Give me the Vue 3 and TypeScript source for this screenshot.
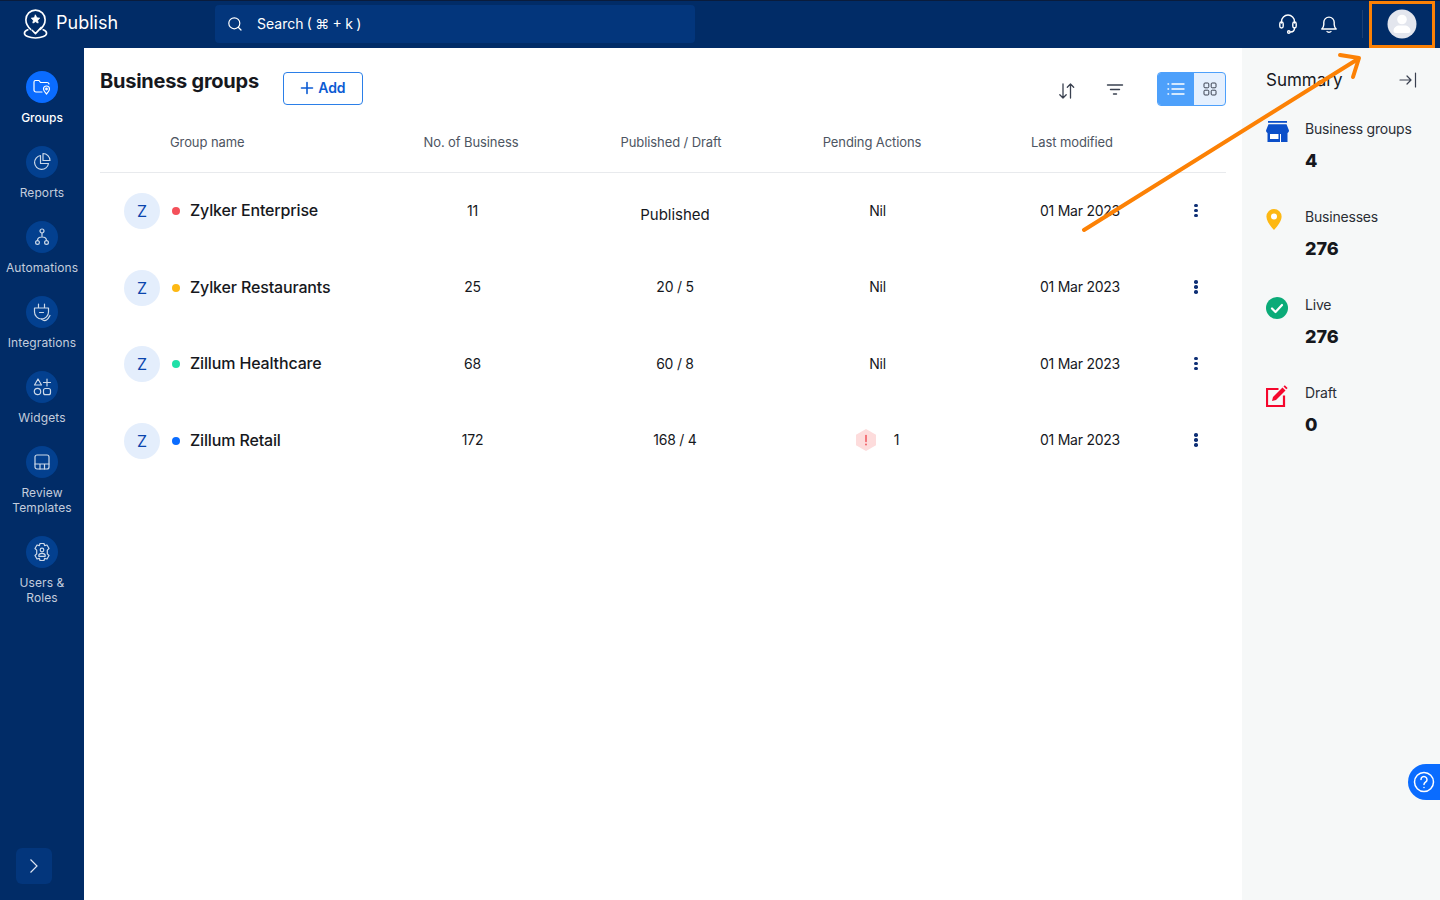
<template>
  <div class="app">
    <header class="topbar">
      <div class="brand">
        <svg class="brand-icon" width="25" height="32" viewBox="0 0 26 32" fill="none" stroke="#fff" stroke-width="1.700" stroke-linecap="round" stroke-linejoin="round">
          <path d="M8 21.500C4.500 18.500 3 15 3 11.600 3 5.900 7.500 1.500 13 1.500s10 4.400 10 10.100c0 3.400-1.500 6.900-5 9.900" />
          <path d="M13 6.800l1.300 2.800 3 .4-2.200 2 .6 3-2.700-1.500-2.700 1.500.6-3-2.200-2 3-.4z" fill="#fff" stroke-width="1" />
          <path d="M9.500 22.500l3.500 3.500 6-6.500" />
          <path d="M5 22c-2.300 .8-3.500 2-3.500 3.500 0 2.800 5 5 11.500 5s11.500-2.200 11.500-5c0-1.500-1.200-2.700-3.500-3.500" />
        </svg>
        <span>Publish</span>
      </div>
      <div class="search">
        <svg width="16" height="16" viewBox="0 0 16 16" fill="none" stroke="#fff" stroke-width="1.200" stroke-linecap="round">
          <circle cx="7.300" cy="7.300" r="5.500" />
          <path d="M11.500 11.500l2.500 2.500" />
        </svg>
        <span>Search ( ⌘ + k )</span>
      </div>
      <div class="top-actions">
        <svg width="20" height="22" viewBox="0 0 20 22" fill="none" stroke="#fff" stroke-width="1.400" stroke-linecap="round">
          <path d="M3.500 10V8.500a6.500 6.500 0 0 1 13 0V10" />
          <rect x="1.800" y="9" width="3.400" height="6" rx="1.700" />
          <rect x="14.800" y="9" width="3.400" height="6" rx="1.700" />
          <path d="M16.500 15c0 2.500-1.500 4-4 4" />
          <circle cx="10.800" cy="19" r="1.200" />
        </svg>
        <svg width="20" height="20" viewBox="0 0 20 20" fill="none" stroke="#fff" stroke-width="1.400" stroke-linecap="round" stroke-linejoin="round">
          <path d="M2.800 15h14.400c-1.300-1.300-2-2.500-2-4.500V8.300a5.200 5.200 0 0 0-10.400 0v2.200c0 2-.7 3.200-2 4.500z" />
          <path d="M8 17.500c.6 1 3.400 1 4 0" />
        </svg>
        <div class="top-sep"></div>
        <div class="avatar">
          <svg width="30" height="30" viewBox="0 0 30 30">
            <circle cx="15" cy="15" r="14.500" fill="#e3e6ee" />
            <circle cx="15" cy="10.500" r="4.800" fill="#fff" />
            <path d="M6.500 22c0-3.600 3-5.500 6-5.500h5c3 0 6 1.900 6 5.500 0 1.300-1 2-2 2H8.500c-1 0-2-.7-2-2z" fill="#fff" />
          </svg>
        </div>
      </div>
    </header>

    <div class="body">
      <nav class="sidebar">
        <div v-for="item in navItems" :key="item.label" class="nav-item" :class="{ active: item.active }">
          <div class="nav-circle">
            <svg width="20" height="20" viewBox="0 0 20 20" fill="none" stroke="#fff" stroke-width="1.200" stroke-linecap="round" stroke-linejoin="round" v-html="item.icon"></svg>
          </div>
          <div class="nav-label">
            <div v-for="line in item.label.split('|')" :key="line">{{ line }}</div>
          </div>
        </div>
        <div class="nav-expand">
          <svg width="10" height="16" viewBox="0 0 10 16" fill="none" stroke="#dfe6f3" stroke-width="1.200">
            <path d="M1.500 1.500L8 8l-6.500 6.500" />
          </svg>
        </div>
      </nav>

      <main class="main">
        <div class="page-head">
          <h1>Business groups</h1>
          <button class="add-btn">
            <svg width="14" height="14" viewBox="0 0 14 14" stroke="#0b5bd3" stroke-width="1.600" stroke-linecap="round">
              <path d="M7 1.500v11M1.500 7h11" />
            </svg>
            Add
          </button>
          <div class="head-tools">
            <svg class="sort-icon" width="18" height="18" viewBox="0 0 18 18" fill="none" stroke="#3a4150" stroke-width="1.300" stroke-linecap="round" stroke-linejoin="round">
              <path d="M5 2v14M1.800 12.800L5 16l3.200-3.200M12.500 16V2M9.300 5.200L12.500 2l3.200 3.200" />
            </svg>
            <svg class="filter-icon" width="18" height="18" viewBox="0 0 18 18" fill="none" stroke="#3a4150" stroke-width="1.400" stroke-linecap="round">
              <path d="M1.500 4h15M4.500 8.500h9M7.500 13h3" />
            </svg>
            <div class="view-toggle">
              <div class="view-btn on">
                <svg width="18" height="14" viewBox="0 0 18 14" fill="none" stroke="#fff" stroke-width="1.400" stroke-linecap="round">
                  <path d="M5 2h12M5 7h12M5 12h12M1 2h.6M1 7h.6M1 12h.6" />
                </svg>
              </div>
              <div class="view-btn">
                <svg width="14" height="14" viewBox="0 0 14 14" fill="none" stroke="#3a4150" stroke-width="1">
                  <rect x="1" y="1" width="4.800" height="4.800" rx="1" />
                  <rect x="8.200" y="1" width="4.800" height="4.800" rx="1" />
                  <rect x="1" y="8.200" width="4.800" height="4.800" rx="1" />
                  <rect x="8.200" y="8.200" width="4.800" height="4.800" rx="1" />
                </svg>
              </div>
            </div>
          </div>
        </div>

        <div class="thead">
          <div class="th-name">Group name</div>
          <div>No. of Business</div>
          <div>Published / Draft</div>
          <div>Pending Actions</div>
          <div>Last modified</div>
        </div>

        <div v-for="row in rows" :key="row.name" class="trow">
          <div class="cell-name">
            <span class="letter">Z</span>
            <span class="dot" :style="{ background: row.dot }"></span>
            <span class="name">{{ row.name }}</span>
          </div>
          <div class="cell">{{ row.count }}</div>
          <div class="cell" :class="{ published: row.status === 'Published' }">{{ row.status }}</div>
          <div class="cell pending">
            <template v-if="row.pending === 'Nil'">Nil</template>
            <template v-else>
              <svg width="22" height="24" viewBox="0 0 22 24">
                <path d="M11 1l10 5.700v10.600L11 23 1 17.300V6.700z" fill="#fddcdc" />
                <path d="M11 7.500v6" stroke="#f0545c" stroke-width="1.500" stroke-linecap="round" />
                <circle cx="11" cy="16.500" r=".9" fill="#f0545c" />
              </svg>
              <span>{{ row.pending }}</span>
            </template>
          </div>
          <div class="cell">{{ row.modified }}</div>
          <div class="cell kebab"><i></i><i></i><i></i></div>
        </div>
      </main>

      <aside class="summary">
        <div class="summary-head">
          <span>Summary</span>
          <svg width="18" height="16" viewBox="0 0 18 16" fill="none" stroke="#3a4150" stroke-width="1.200" stroke-linecap="round" stroke-linejoin="round">
            <path d="M1 8h11M8 4l4 4-4 4" />
            <path d="M16.500 1v14" />
          </svg>
        </div>
        <div class="stat">
          <div class="stat-icon">
            <svg width="23" height="21" viewBox="0 0 23 21">
              <path d="M2 0h19v1.800H2z" fill="#0b4fc9" />
              <path d="M2.500 3.200h18L23 9.500c0 1.500-1 2.500-2 2.500H2C1 12 0 11 0 9.500z" fill="#0b4fc9" />
              <path d="M1.500 11h20v10h-20z" fill="#0b4fc9" />
              <path d="M4 13h8.500v5H4z" fill="#fff" />
              <path d="M14 13h1v8h-1z" fill="#fff" />
            </svg>
          </div>
          <div>
            <div class="stat-label">Business groups</div>
            <div class="stat-value">4</div>
          </div>
        </div>
        <div class="stat">
          <div class="stat-icon">
            <svg width="16" height="21" viewBox="0 0 16 21">
              <path d="M8 0a7.600 7.600 0 0 1 7.600 7.600C15.600 12 11.500 17.500 8 21 4.500 17.500.4 12 .4 7.600A7.600 7.600 0 0 1 8 0z" fill="#fdb813" />
              <circle cx="8" cy="7.500" r="3" fill="#fff" />
            </svg>
          </div>
          <div>
            <div class="stat-label">Businesses</div>
            <div class="stat-value">276</div>
          </div>
        </div>
        <div class="stat">
          <div class="stat-icon">
            <svg width="22" height="22" viewBox="0 0 22 22">
              <circle cx="11" cy="11" r="11" fill="#0bab78" />
              <path d="M6 11.500l3.500 3.500L16 8" fill="none" stroke="#fff" stroke-width="2.200" stroke-linecap="round" stroke-linejoin="round" />
            </svg>
          </div>
          <div>
            <div class="stat-label">Live</div>
            <div class="stat-value">276</div>
          </div>
        </div>
        <div class="stat">
          <div class="stat-icon">
            <svg width="22" height="22" viewBox="0 0 22 22">
              <path d="M12.500 4H1v17h17V10.500" fill="none" stroke="#f5072d" stroke-width="2.200" />
              <path d="M6 16l1-4 9.500-9.500 3 3L10 15z" fill="#f5072d" />
              <path d="M17.500 1.500l1.300-1.300 2.800 2.800-1.300 1.300z" fill="#f5072d" />
            </svg>
          </div>
          <div>
            <div class="stat-label">Draft</div>
            <div class="stat-value">0</div>
          </div>
        </div>
        <div class="help">
          <svg width="22" height="22" viewBox="0 0 22 22" fill="none" stroke="#fff" stroke-width="1.500" stroke-linecap="round">
            <circle cx="11" cy="11" r="9.500" />
            <path d="M8 8.500a3 3 0 1 1 4.800 2.400c-1.200.9-1.800 1.400-1.800 2.600" />
            <path d="M11 16.500v.1" />
          </svg>
        </div>
      </aside>
    </div>

    <!-- annotation drawn over the screenshot -->
    <div class="mark-box"></div>
    <svg class="mark-arrow" width="300" height="190" viewBox="1075 50 300 190" fill="none" stroke="#fc8105" stroke-width="4" stroke-linecap="round" stroke-linejoin="round">
      <path d="M1084 230L1358 59" />
      <path d="M1340 55l19 3-6 19" />
    </svg>
  </div>
</template>

<script setup lang="ts">
interface NavItem {
  label: string
  icon: string
  active?: boolean
}

const navItems: NavItem[] = [
  {
    label: 'Groups',
    active: true,
    icon: '<path d="M10 15H4a2 2 0 0 1-2-2V5a1.500 1.500 0 0 1 1.500-1.500H7l1.500 2H15a2 2 0 0 1 2 1.500"/><path d="M14.500 9a3 3 0 0 1 3 3c0 1.700-1.500 3.500-3 5-1.500-1.500-3-3.300-3-5a3 3 0 0 1 3-3z"/><circle cx="14.500" cy="12" r=".8"/>',
  },
  {
    label: 'Reports',
    icon: '<path d="M8.500 3.500a7 7 0 1 0 8 8h-8z"/><path d="M11 1.500v7h7a7 7 0 0 0-7-7z"/>',
  },
  {
    label: 'Automations',
    icon: '<circle cx="10" cy="4" r="2"/><circle cx="5.500" cy="15.500" r="1.900"/><circle cx="14.500" cy="15.500" r="1.900"/><path d="M10 6v4M5.500 13.500c0-2 1.500-3.500 4.500-3.500s4.500 1.500 4.500 3.500"/>',
  },
  {
    label: 'Integrations',
    icon: '<path d="M6.500 2v4M12.500 2v4M2.500 6h14v4a7 7 0 0 1-7 7 7 7 0 0 1-7-7z"/><path d="M7.500 10.500h4"/><path d="M9.500 17c1 1.500 3.500 2 5 1s2.500-2.500 3.500-4.500"/>',
  },
  {
    label: 'Widgets',
    icon: '<path d="M6 2l3.500 6h-7z"/><path d="M15 2v7M11.500 5.500h7"/><circle cx="5.500" cy="14.500" r="3.200"/><rect x="11.500" y="11.500" width="7" height="6.200" rx="2"/>',
  },
  {
    label: 'Review|Templates',
    icon: '<rect x="3" y="3" width="14" height="14" rx="2"/><path d="M3 12h14M8 12v5M12.500 12v5"/>',
  },
  {
    label: 'Users &|Roles',
    icon: '<path d="M8 1.500h4l.6 2.200 2.400-.7 2 3.500-1.700 1.700v3.600l1.700 1.700-2 3.500-2.400-.7-.6 2.200H8l-.6-2.200-2.400.7-2-3.500 1.700-1.700V8.200L3 6.500l2-3.500 2.400.7z"/><circle cx="10" cy="8" r="1.800"/><path d="M6.800 13.500c0-1.300 1.300-2.200 3.200-2.200s3.200.9 3.200 2.200v.8H6.800z"/>',
  },
]

const rows = [
  { name: 'Zylker Enterprise', dot: '#f4505a', count: 11, status: 'Published', pending: 'Nil', modified: '01 Mar 2023' },
  { name: 'Zylker Restaurants', dot: '#fdb813', count: 25, status: '20 / 5', pending: 'Nil', modified: '01 Mar 2023' },
  { name: 'Zillum Healthcare', dot: '#1fe0a8', count: 68, status: '60 / 8', pending: 'Nil', modified: '01 Mar 2023' },
  { name: 'Zillum Retail', dot: '#0a6cff', count: 172, status: '168 / 4', pending: '1', modified: '01 Mar 2023' },
]
</script>

<style>
html,
body {
  margin: 0;
  background: #fff;
}
</style>

<style scoped>
.app {
  position: relative;
  width: 1440px;
  height: 900px;
  overflow: hidden;
  display: flex;
  flex-direction: column;
  font-family: Inter, "Noto Sans", sans-serif;
  color: #16181d;
}

.topbar {
  height: 45px;
  flex: none;
  padding-bottom: 2px;
  display: flex;
  align-items: center;
  background: #012c67;
  border-top: 1px solid #0a1c3c;
}

.brand {
  width: 215px;
  display: flex;
  align-items: center;
  gap: 8px;
  padding-left: 23px;
  box-sizing: border-box;
  color: #fff;
  font-size: 18px;
}

.brand span {
  margin-bottom: 2px;
}

.search {
  width: 480px;
  height: 38px;
  box-sizing: border-box;
  display: flex;
  align-items: center;
  gap: 14px;
  padding-left: 12px;
  background: #03367c;
  border-radius: 4px;
  color: #fff;
  font-size: 14px;
  word-spacing: -0.6px;
}

.top-actions {
  margin-left: auto;
  display: flex;
  align-items: center;
  gap: 21px;
  padding-right: 23px;
}

.top-sep {
  width: 1px;
  height: 28px;
  background: #1b3f74;
  margin-left: 2px;
}

.avatar {
  display: flex;
  margin-left: 3px;
}

.body {
  flex: 1;
  display: flex;
  min-height: 0;
}

.sidebar {
  position: relative;
  width: 84px;
  flex: none;
  box-sizing: border-box;
  padding-top: 23px;
  background: #012c67;
  display: flex;
  flex-direction: column;
  align-items: center;
}

.nav-item {
  display: flex;
  flex-direction: column;
  align-items: center;
  margin-bottom: 21px;
}

.nav-circle {
  width: 32px;
  height: 32px;
  border-radius: 50%;
  background: #03408f;
  display: flex;
  align-items: center;
  justify-content: center;
}

.nav-circle svg {
  opacity: 0.8;
}

.nav-label {
  margin-top: 7px;
  font-size: 12px;
  line-height: 15px;
  letter-spacing: 0.1px;
  text-align: center;
  color: #c3cddd;
  white-space: nowrap;
}

.nav-item.active .nav-circle {
  background: #0a6cff;
}

.nav-item.active .nav-circle svg {
  opacity: 1;
}

.nav-item.active .nav-label {
  color: #fff;
  font-weight: 500;
  letter-spacing: 0;
}

.nav-expand {
  position: absolute;
  left: 16px;
  bottom: 16px;
  width: 36px;
  height: 36px;
  border-radius: 6px;
  background: #03367c;
  display: flex;
  align-items: center;
  justify-content: center;
}

.main {
  flex: 1;
  min-width: 0;
  padding: 0 16px;
  background: #fff;
}

.page-head {
  height: 78px;
  display: flex;
  align-items: flex-start;
}

.page-head h1 {
  margin: 20px 0 0;
  font-size: 20px;
  line-height: 26px;
  font-weight: 700;
  letter-spacing: -0.25px;
  color: #16181d;
}

.add-btn {
  margin: 24px 0 0 24px;
  width: 80px;
  height: 33px;
  box-sizing: border-box;
  display: flex;
  align-items: center;
  justify-content: center;
  gap: 4px;
  background: #fff;
  border: 1px solid #2b7fe8;
  border-radius: 4px;
  color: #0b5bd3;
  font-family: inherit;
  font-size: 14px;
  line-height: 15px;
  font-weight: 600;
  padding: 0 0 2px;
}

.head-tools {
  margin: 24px 0 0 auto;
  height: 34px;
  display: flex;
  align-items: center;
  gap: 31px;
}

.sort-icon {
  margin-top: 4px;
  margin-right: -1px;
}

.filter-icon {
  margin-top: 2px;
}

.view-toggle {
  display: flex;
  width: 69px;
  height: 34px;
  box-sizing: border-box;
  border: 1px solid #4da0fb;
  border-radius: 4px;
  overflow: hidden;
  background: #e5f0fe;
  margin-left: 2px;
}

.view-btn {
  flex: 1;
  display: flex;
  align-items: center;
  justify-content: center;
}

.view-btn.on {
  flex: none;
  width: 36px;
  background: #4da0fb;
}

.thead {
  display: grid;
  grid-template-columns: 270px 202px 198px 204px 196px;
  height: 47px;
  box-sizing: border-box;
  padding-bottom: 15px;
  align-items: center;
  text-align: center;
  font-size: 13px;
  letter-spacing: -0.1px;
  color: #4d5562;
  border-bottom: 1px solid #e8eaed;
}

.th-name {
  text-align: left;
  padding-left: 70px;
}

.trow {
  display: grid;
  grid-template-columns: 270px 205px 200px 205px 200px 46px;
  height: 76.500px;
  align-items: center;
  text-align: center;
  font-size: 14px;
  letter-spacing: -0.25px;
  color: #16181d;
}

.cell {
  margin-bottom: 2px;
}

.cell-name {
  display: flex;
  align-items: center;
  padding-left: 24px;
  text-align: left;
}

.letter {
  width: 36px;
  height: 36px;
  border-radius: 50%;
  background: #e4eefc;
  color: #0b45ad;
  font-size: 16px;
  display: flex;
  align-items: center;
  justify-content: center;
}

.dot {
  width: 8px;
  height: 8px;
  border-radius: 50%;
  margin-left: 12px;
  margin-right: 10px;
}

.name {
  font-size: 16px;
  font-weight: 500;
  letter-spacing: -0.15px;
  margin-bottom: 2px;
}

.published {
  font-size: 15px;
  margin: 6px 0 0;
  letter-spacing: 0;
}

.pending {
  display: flex;
  align-items: center;
  justify-content: center;
  gap: 17px;
}

.pending svg {
  margin-left: -1px;
}

.kebab {
  display: flex;
  flex-direction: column;
  align-items: flex-start;
  gap: 1.500px;
  padding-left: 14.250px;
}

.kebab i {
  width: 3.500px;
  height: 3.500px;
  border-radius: 50%;
  background: #0e2f75;
}

.summary {
  position: relative;
  width: 198px;
  flex: none;
  box-sizing: border-box;
  padding: 20px 24px 0;
  background: #f6f8f8;
}

.summary-head {
  display: flex;
  align-items: center;
  justify-content: space-between;
  font-size: 17px;
  height: 24px;
  margin: 0 -1px 28px 0;
}

.stat {
  display: flex;
  gap: 15px;
  height: 88px;
}

.stat-icon {
  flex: none;
  width: 24px;
  margin-top: 1px;
}

.stat-icon svg {
  display: block;
}

.stat-label {
  font-size: 14px;
  line-height: 18px;
  letter-spacing: -0.2px;
  color: #2a2e35;
}

.stat-value {
  margin-top: 11px;
  font-size: 18px;
  line-height: 24px;
  font-weight: 800;
  color: #16181d;
}

.help {
  position: absolute;
  right: 0;
  top: 716px;
  width: 32px;
  height: 36px;
  border-radius: 18px 0 0 18px;
  background: #0a6cff;
  display: flex;
  align-items: center;
  padding-left: 5px;
  box-sizing: border-box;
}

.mark-box {
  position: absolute;
  left: 1369px;
  top: 1px;
  width: 66px;
  height: 47px;
  box-sizing: border-box;
  border: 3px solid #fc8105;
}

.mark-arrow {
  position: absolute;
  left: 1075px;
  top: 50px;
}
</style>
